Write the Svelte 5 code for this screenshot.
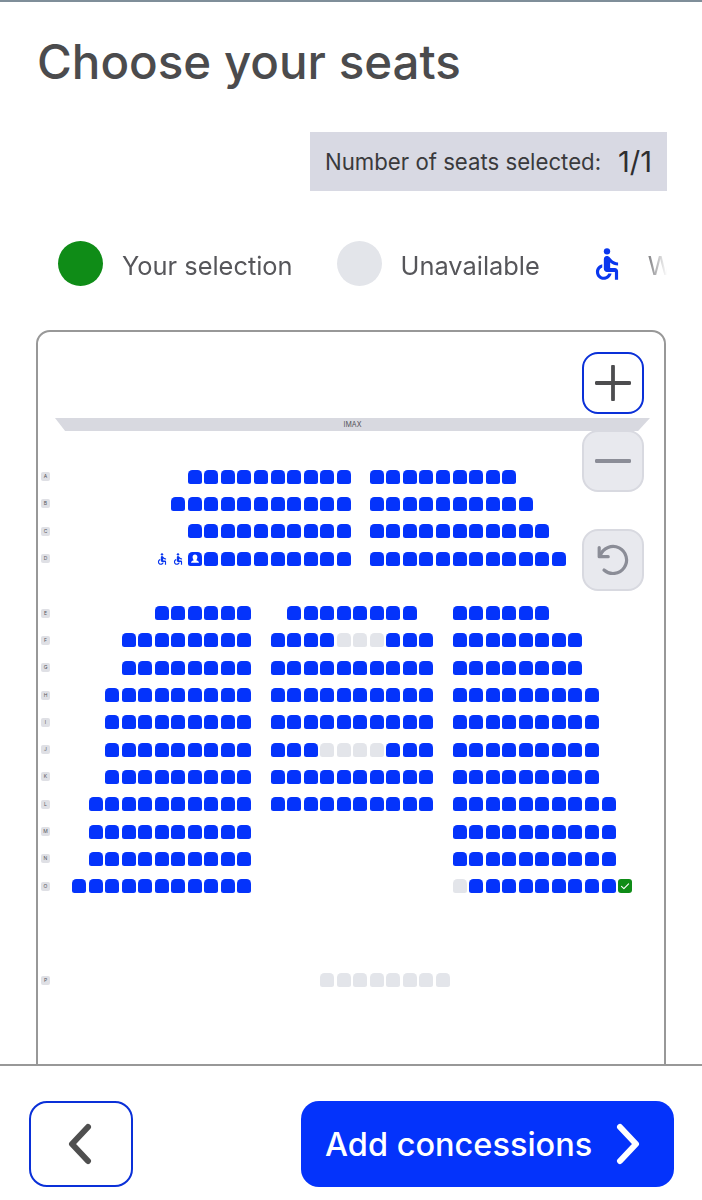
<script>
  // [startCol, status string] per block, b = available, g = taken, s = selected
  const repeat = (c, n) => c.repeat(n);
  const rows = [
    { label: "A", blocks: [[7, repeat("b", 10)], [18, repeat("b", 9)]] },
    { label: "B", blocks: [[6, repeat("b", 11)], [18, repeat("b", 10)]] },
    { label: "C", blocks: [[7, repeat("b", 10)], [18, repeat("b", 11)]] },
    { label: "D", blocks: [[5, "wwc" + repeat("b", 9)], [18, repeat("b", 12)]] },
    { label: "E", gap: "aisle", blocks: [[5, repeat("b", 6)], [13, repeat("b", 8)], [23, repeat("b", 6)]] },
    { label: "F", blocks: [[3, repeat("b", 8)], [12, "bbbbgggbbb"], [23, repeat("b", 8)]] },
    { label: "G", blocks: [[3, repeat("b", 8)], [12, repeat("b", 10)], [23, repeat("b", 8)]] },
    { label: "H", blocks: [[2, repeat("b", 9)], [12, repeat("b", 10)], [23, repeat("b", 9)]] },
    { label: "I", blocks: [[2, repeat("b", 9)], [12, repeat("b", 10)], [23, repeat("b", 9)]] },
    { label: "J", blocks: [[2, repeat("b", 9)], [12, "bbbggggbbb"], [23, repeat("b", 9)]] },
    { label: "K", blocks: [[2, repeat("b", 9)], [12, repeat("b", 10)], [23, repeat("b", 9)]] },
    { label: "L", blocks: [[1, repeat("b", 10)], [12, repeat("b", 10)], [23, repeat("b", 10)]] },
    { label: "M", blocks: [[1, repeat("b", 10)], [23, repeat("b", 10)]] },
    { label: "N", blocks: [[1, repeat("b", 10)], [23, repeat("b", 10)]] },
    { label: "O", blocks: [[0, repeat("b", 11)], [23, "g" + repeat("b", 9) + "s"]] },
    { label: "P", gap: "rear", blocks: [[15, repeat("g", 8)]] },
  ];

  const seatsOf = (row) =>
    row.blocks.flatMap(([start, kinds]) =>
      [...kinds].map((kind, i) => ({ col: start + i + 2, kind }))
    );
</script>

{#snippet wheelchair(size)}
  <svg class="wheelchair" width={size} height={size} viewBox="0 0 24 24" fill="currentColor" aria-hidden="true">
    <circle cx="12" cy="4" r="2" />
    <path d="M19 13v-2c-1.54.02-3.09-.75-4.07-1.83l-1.29-1.43c-.17-.19-.38-.34-.61-.45-.01 0-.01-.01-.02-.01H13c-.35-.2-.75-.3-1.19-.26C10.76 7.11 10 8.04 10 9.09V15c0 1.1.9 2 2 2h5v5h2v-5.5c0-1.1-.9-2-2-2h-3v-3.45c1.29 1.07 3.25 1.94 5 1.95zm-6.17 5c-.41 1.16-1.52 2-2.83 2-1.66 0-3-1.34-3-3 0-1.31.84-2.41 2-2.83V12.1c-2.28.46-4 2.48-4 4.9 0 2.76 2.24 5 5 5 2.42 0 4.44-1.72 4.9-4h-2.07z" />
  </svg>
{/snippet}

<div class="page">
  <main class="content">
    <h1>Choose your seats</h1>

    <div class="counter-wrap">
      <div class="counter">
        <span>Number of seats selected:</span>
        <strong>1/1</strong>
      </div>
    </div>

    <div class="legend">
      <div class="legend-item"><span class="dot green"></span><span class="legend-text">Your selection</span></div>
      <div class="legend-item"><span class="dot grey"></span><span class="legend-text">Unavailable</span></div>
      <div class="legend-item wheel">{@render wheelchair(38)}<span class="legend-text">Wheelchair space</span></div>
    </div>

    <section class="map">
      <div class="controls">
        <button class="zoom-btn active" aria-label="Zoom in">
          <svg width="36" height="36" viewBox="0 0 36 36"><path d="M18 1.500v33M1.500 18h33" stroke="#4d4d4f" stroke-width="3.800" stroke-linecap="round" /></svg>
        </button>
        <button class="zoom-btn" aria-label="Zoom out">
          <svg width="36" height="36" viewBox="0 0 36 36"><path d="M1.500 18h33" stroke="#8b8d97" stroke-width="3.800" stroke-linecap="round" /></svg>
        </button>
        <button class="zoom-btn reset" aria-label="Reset">
          <svg width="34" height="34" viewBox="0 0 34 34" fill="none" stroke="#8b8d97" stroke-width="3.200" stroke-linecap="round" stroke-linejoin="round"><path d="M4.300 12.500A13.500 13.500 0 1 1 8 27" /><path d="M3.200 4.500v9.200h9" /></svg>
        </button>
      </div>

      <div class="screen">IMAX</div>

      <div class="seats">
        {#each rows as row}
          <div class="row {row.gap ?? ''}">
            <span class="row-label">{row.label}</span>
            {#each seatsOf(row) as seat}
              {#if seat.kind === "w"}
                <span class="cell blue-icon" style="grid-column: {seat.col}">{@render wheelchair(14)}</span>
              {:else if seat.kind === "c"}
                <span class="seat b" style="grid-column: {seat.col}">
                  <svg width="14" height="14" viewBox="0 0 14 14" fill="#fff"><path d="M7 2.400c1.500 0 2.400 1.100 2.400 2.600S8.700 7.600 8.200 8.200c.9.500 2.800.8 2.800 2.600H3c0-1.800 1.900-2.100 2.800-2.600C5.300 7.600 4.600 6.500 4.600 5S5.500 2.400 7 2.400z" /></svg>
                </span>
              {:else if seat.kind === "s"}
                <span class="seat s" style="grid-column: {seat.col}">
                  <svg width="14" height="14" viewBox="0 0 14 14" fill="none" stroke="#fff" stroke-width="1.100" stroke-linecap="round" stroke-linejoin="round"><path d="M3.500 7.400 5.900 9.600 10.600 4.800" /></svg>
                </span>
              {:else}
                <span class="seat {seat.kind}" style="grid-column: {seat.col}"></span>
              {/if}
            {/each}
          </div>
        {/each}
      </div>
    </section>
  </main>

  <footer class="footer">
    <button class="back" aria-label="Back">
      <svg width="28" height="42" viewBox="0 0 28 42" fill="none" stroke="#4f4f4f" stroke-width="6" stroke-linecap="round" stroke-linejoin="round"><path d="M21 4 5 21l16 17" /></svg>
    </button>
    <button class="next">
      Add concessions
      <svg width="28" height="42" viewBox="0 0 28 42" fill="none" stroke="#fff" stroke-width="6" stroke-linecap="round" stroke-linejoin="round"><path d="M5 4l16 17L5 38" /></svg>
    </button>
  </footer>
</div>

<style>
  :global(body) {
    margin: 0;
    background: #fff;
  }

  .page {
    width: 702px;
    height: 1200px;
    display: flex;
    flex-direction: column;
    overflow: hidden;
    border-top: 2px solid #7f8e99;
    box-sizing: border-box;
    font-family: Inter, "Liberation Sans", sans-serif;
    color: #4d4d4f;
  }

  .content {
    flex: 1;
    min-height: 0;
    overflow: hidden;
    padding: 0 35px 0 37px;
  }

  h1 {
    margin: 0;
    padding-top: 32px;
    font-size: 47.500px;
    line-height: 56px;
    font-weight: 500;
    color: #4b4b4d;
  }

  .counter-wrap {
    display: flex;
    justify-content: flex-end;
    margin-top: 42px;
  }

  .counter {
    width: 357px;
    height: 59px;
    box-sizing: border-box;
    padding: 0 15px;
    background: #d8d9e3;
    display: flex;
    align-items: center;
    justify-content: space-between;
    font-size: 22.200px;
    color: #3a3a3c;
  }

  .counter strong {
    font-size: 29px;
    font-weight: 400;
    color: #2e2e30;
  }

  .legend {
    margin-top: 50px;
    padding-left: 21px;
    height: 45px;
    display: flex;
    align-items: center;
    gap: 44px;
    overflow: hidden;
    white-space: nowrap;
    font-size: 25.400px;
    color: #56565a;
    mask-image: linear-gradient(to right, #000 96%, transparent 100%);
  }

  .legend-item {
    display: flex;
    align-items: center;
    gap: 19px;
    flex: none;
  }

  .legend-text {
    padding-top: 3px;
  }

  .wheel {
    gap: 22px;
    margin-left: 4px;
  }

  .wheel .wheelchair {
    color: #0a37ee;
  }

  .dot {
    width: 45px;
    height: 45px;
    border-radius: 50%;
  }

  .dot.green {
    background: #0f8c17;
  }

  .dot.grey {
    background: #e3e5ea;
  }

  .map {
    position: relative;
    margin: 44px 0 0 -1px;
    width: 630px;
    height: 900px;
    box-sizing: border-box;
    border: 2px solid #989898;
    border-radius: 14px;
    padding-top: 86px;
    background: #fff;
  }

  .controls {
    position: absolute;
    top: 20px;
    right: 20px;
    display: flex;
    flex-direction: column;
    gap: 16px;
    z-index: 1;
  }

  .zoom-btn {
    width: 62px;
    height: 62px;
    padding: 0;
    box-sizing: border-box;
    border: 2px solid #d8d9e0;
    border-radius: 16px;
    background: #e8e9ee;
    display: flex;
    align-items: center;
    justify-content: center;
  }

  .zoom-btn.active {
    background: #fff;
    border-color: #0a30d8;
  }

  .zoom-btn.reset {
    margin-top: 21px;
  }

  .screen {
    margin: 0 14px 0 17px;
    height: 13px;
    background: #d8d9e0;
    clip-path: polygon(0 0, 100% 0, 98% 100%, 1.700% 100%);
    text-align: center;
    font-size: 7px;
    line-height: 14px;
    color: #55555a;
  }

  .seats {
    margin-top: 32px;
    padding-left: 3px;
    display: flex;
    flex-direction: column;
  }

  .row {
    display: grid;
    grid-template-columns: 31px repeat(34, 16.550px);
    grid-template-rows: 27.300px;
    align-items: center;
  }

  .row.aisle {
    margin-top: 27.300px;
  }

  .row.rear {
    margin-top: 66.700px;
  }

  .row-label {
    grid-column: 1;
    grid-row: 1;
    width: 9px;
    height: 9px;
    border-radius: 2px;
    background: #dfe0e5;
    font-size: 5px;
    line-height: 9px;
    text-align: center;
    color: #55555a;
  }

  .seat,
  .cell {
    grid-row: 1;
    width: 14px;
    height: 14px;
    display: flex;
    align-items: center;
    justify-content: center;
  }

  .seat {
    border-radius: 4.500px 4.500px 2.500px 2.500px;
  }

  .seat.b {
    background: #0433fb;
  }

  .seat.g {
    background: #e3e5ea;
  }

  .seat.s {
    background: #0f8c17;
    border-radius: 3px;
  }

  .blue-icon {
    color: #0a37ee;
  }

  .footer {
    flex: none;
    height: 136px;
    box-sizing: border-box;
    border-top: 2px solid #989898;
    padding: 35px 28px 0 29px;
    display: flex;
    justify-content: space-between;
    align-items: flex-start;
    background: #fff;
  }

  .back,
  .next {
    height: 86px;
    border-radius: 18px;
    display: flex;
    align-items: center;
    font-family: inherit;
    box-sizing: border-box;
  }

  .back {
    width: 104px;
    padding: 0;
    justify-content: center;
    background: #fff;
    border: 2px solid #0a30d8;
  }

  .next {
    width: 373px;
    padding: 0 0 0 24px;
    gap: 23px;
    background: #0433fb;
    border: 0;
    color: #fff;
    font-size: 32.500px;
    font-weight: 500;
  }
</style>
